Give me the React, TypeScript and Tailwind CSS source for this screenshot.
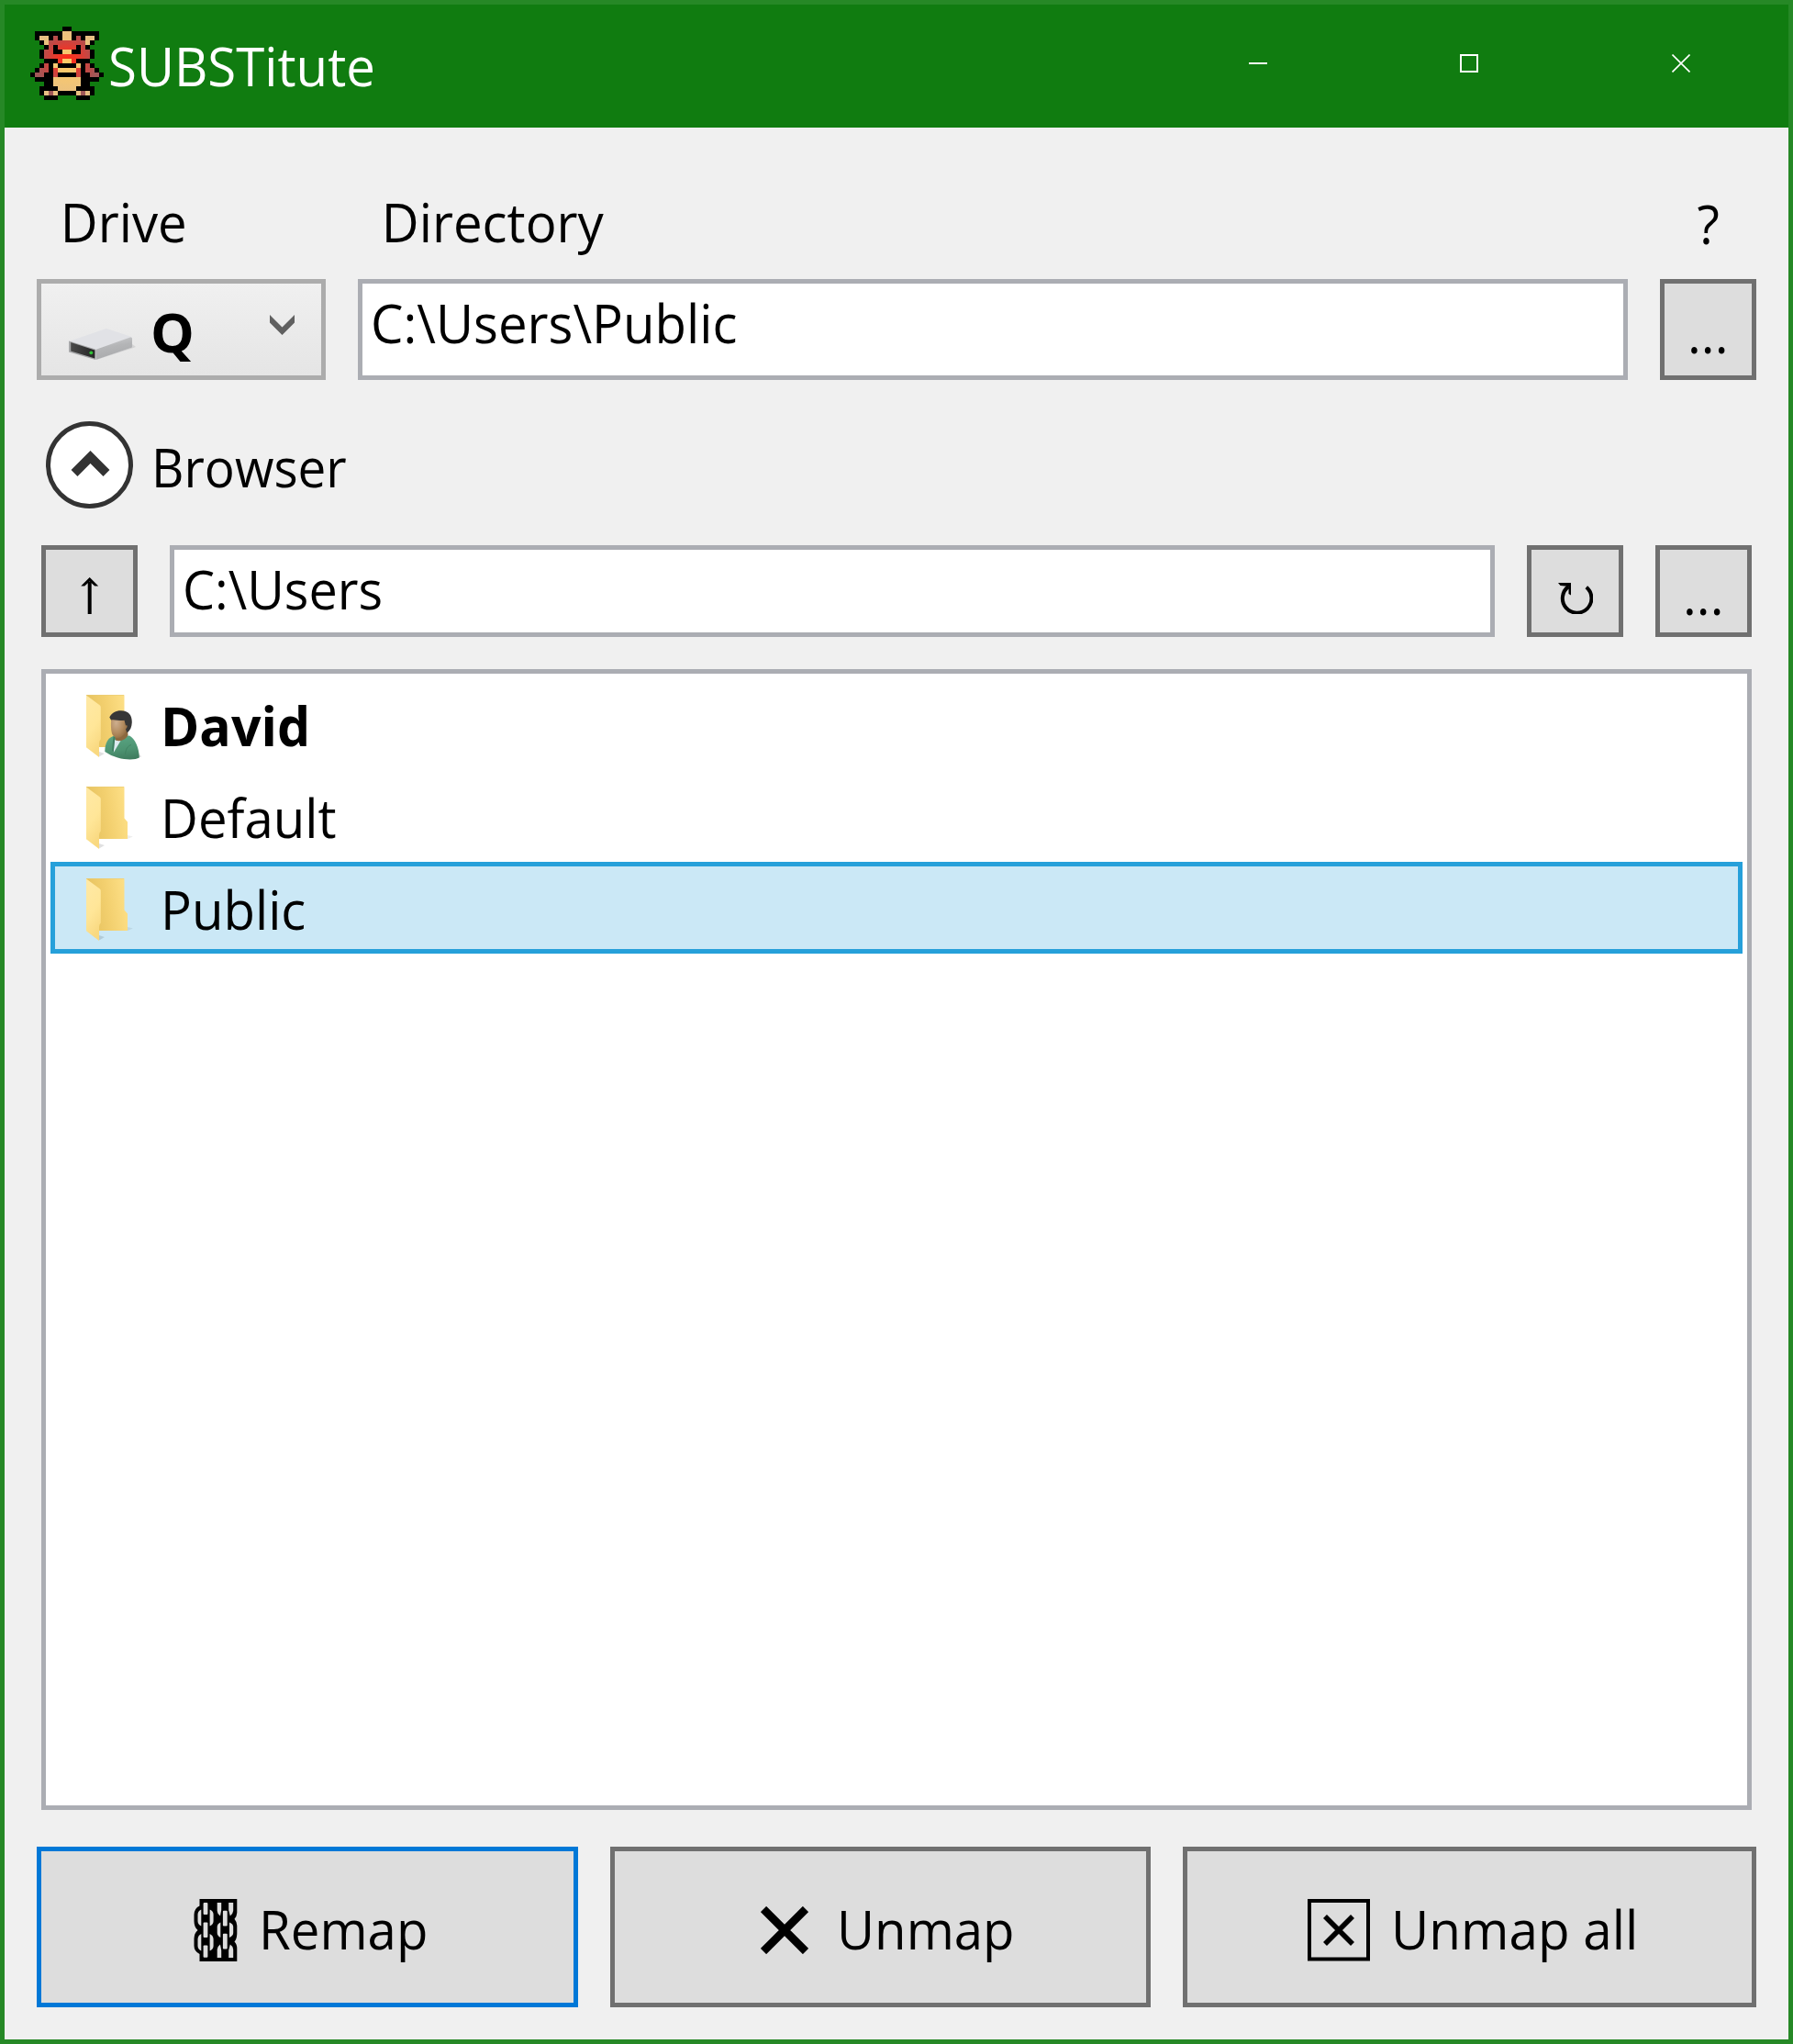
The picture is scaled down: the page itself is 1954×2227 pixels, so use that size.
import React from "react";

const SPRITE = [
  ".......KK.......",
  ".KKKKKKTTKKKKKK.",
  ".KTTKRKTTKRKTTK.",
  "..KTRRRRRRRRTK..",
  "...KRKRRRRKRK...",
  "..KRRKKTTKKRRK..",
  "..KRRRRRRRRRRK..",
  "...KKKRTTRKKK...",
  "..KRKTKKKKTKRK..",
  ".KRRKRTTTTRKRRK.",
  "KRRKKRKKKKRKKRRK",
  ".KKKKTTTTTTKKKK.",
  "...KKTTTTTTKK...",
  "..KKKKTTTTKKKK..",
  "..KTRTKKKKTRTK..",
  "...KKK....KKK...",
];

function AppIcon() {
  return (
    <svg viewBox="0 0 16 16" className="h-20 w-20 shrink-0" shapeRendering="crispEdges">
      <defs>
        <radialGradient id="red" gradientUnits="userSpaceOnUse" cx="8" cy="7.3" r="7">
          <stop offset="0" stopColor="#ff2c18" />
          <stop offset="0.3" stopColor="#f03526" />
          <stop offset="0.6" stopColor="#cc443f" />
          <stop offset="1" stopColor="#a05858" />
        </radialGradient>
        <radialGradient id="tan" gradientUnits="userSpaceOnUse" cx="8" cy="8" r="8">
          <stop offset="0" stopColor="#ffcb66" />
          <stop offset="1" stopColor="#e6bf85" />
        </radialGradient>
      </defs>
      {SPRITE.flatMap((row, y) =>
        row.split("").map((c, x) =>
          c === "." ? null : (
            <rect
              key={`${x}-${y}`}
              x={x}
              y={y}
              width="1"
              height="1"
              fill={c === "K" ? "#000" : c === "R" ? "url(#red)" : "url(#tan)"}
            />
          )
        )
      )}
    </svg>
  );
}

function Label({ children, className = "" }: { children: React.ReactNode; className?: string }) {
  return (
    <span className={`block origin-left scale-x-[0.955] whitespace-pre text-[59px] leading-[80px] ${className}`}>
      {children}
    </span>
  );
}

function DriveIcon() {
  return (
    <svg viewBox="0 0 74 36" className="h-[36px] w-[74px] shrink-0">
      <defs>
        <linearGradient id="dside" x1="0" y1="0" x2="0.3" y2="1">
          <stop offset="0" stopColor="#cfd0d2" />
          <stop offset="0.5" stopColor="#b4b5b7" />
          <stop offset="1" stopColor="#a9aaac" />
        </linearGradient>
        <linearGradient id="dfront" x1="0" y1="0" x2="1" y2="0">
          <stop offset="0" stopColor="#4a4a4a" />
          <stop offset="1" stopColor="#262626" />
        </linearGradient>
      </defs>
      <path d="M30 34 69 21.5 73 20 69 17Z" fill="#d4d4d4" />
      <path d="M0 14 40 0.2Q41 0 42 0.2L67 8.5Q69 9.2 69 11V20.5L30 34 0 25Z" fill="#e1e2e6" />
      <path d="M29 23 67 9.6Q69 9 69 11V20.5L29.5 34Z" fill="url(#dside)" />
      <path d="M0 13.5 29 22.5V34L0 25.5Z" fill="#a6a7a9" />
      <path d="M2.2 15 28.3 23.4V32.6L2.2 24.4Z" fill="url(#dfront)" />
      <circle cx="24.3" cy="26.3" r="1.9" fill="#2fc436" />
    </svg>
  );
}

function FolderIcon({ user = false }: { user?: boolean }) {
  return (
    <svg viewBox="0 0 60 72" className="h-[72px] w-[60px] shrink-0">
      <defs>
        <linearGradient id="fback" x1="0" y1="0.2" x2="1" y2="0">
          <stop offset="0" stopColor="#e6c25f" />
          <stop offset="0.45" stopColor="#f3d06f" />
          <stop offset="1" stopColor="#ffe28a" />
        </linearGradient>
        <linearGradient id="ffront" x1="0" y1="0" x2="0.3" y2="1">
          <stop offset="0" stopColor="#ffe9a6" />
          <stop offset="0.6" stopColor="#ffe698" />
          <stop offset="1" stopColor="#f9d981" />
        </linearGradient>
        <radialGradient id="face" cx="0.3" cy="0.4" r="0.7">
          <stop offset="0" stopColor="#cdae8e" />
          <stop offset="0.6" stopColor="#b18a5e" />
          <stop offset="1" stopColor="#8f6a40" />
        </radialGradient>
        <linearGradient id="shirt" x1="0.3" y1="0" x2="0.5" y2="1">
          <stop offset="0" stopColor="#5aa583" />
          <stop offset="0.6" stopColor="#4d9472" />
          <stop offset="1" stopColor="#3f7d5f" />
        </linearGradient>
      </defs>
      <path d="M14 67.5 20 64 14 62Z" fill="#000" opacity="0.12" />
      <path d="M45 57 51 54.5 45 53Z" fill="#000" opacity="0.07" />
      <path d="M0 0H40.8L41.5 0.8V34.5L45 38.5V57H10Z" fill="url(#fback)" />
      <path d="M0 0.3H41.2" stroke="#e8cb76" strokeWidth="0.7" />
      <path d="M0 0.5 14.6 11.2Q15.8 12 15.8 13.5V48.5Q14 50 14 53V68L0 57.3Z" fill="url(#ffront)" />
      {user && (
        <g>
          <path d="M50 69 60.5 67.5 56 64Z" fill="#000" opacity="0.15" />
          <path d="M20.3 61C20.5 53 23.5 47 29.5 45L47 44.5C53 48 57.5 57 57.8 68.5 52 72 34 71.5 20.3 62Z" fill="url(#shirt)" />
          <path d="M30.5 49 37.5 50 29.8 63Z" fill="#dceaf0" />
          <path d="M29.5 45.5 31.5 46 29.8 62 28 61Z" fill="#3e7f61" />
          <path d="M42.5 65C43 59 45 56 49 54.5" fill="none" stroke="#3d7f60" strokeWidth="0.8" />
          <path d="M31 44 45 38 45.5 44C43 48.5 38 51.5 32 49.5Z" fill="#8d693f" />
          <path d="M27.3 26C26.5 33 27 39.5 28.3 43 29.8 46 33 47.8 36.5 46.5 41 44.5 44 40 46 34L45 25 36 20Z" fill="url(#face)" />
          <path d="M25.3 24.5C28 19 33 17 38 17.2 46 17.5 50 22 49.8 30 49.6 35 48 39 44.5 41.5L43 37.5C46 34 44.5 32.5 43 33.5L41.5 27.8C37 28.8 31 26.5 27 27.5Z" fill="#373737" />
        </g>
      )}
    </svg>
  );
}

function ChainIcon() {
  const slots: [number, number, number, number][] = [
    [10.6, 4, 4.8, 13],
    [10.6, 25.5, 4.8, 16.5],
    [10.6, 50.5, 4.8, 13.3],
    [31.9, 12.8, 4.8, 16.6],
    [31.9, 37.8, 4.8, 16.6],
  ];
  return (
    <svg viewBox="0 0 48 68" className="h-[68px] w-[48px] shrink-0">
      <path
        d="M6.5 0H47.3V15Q47 19.5 44.5 21.7 47.3 25 47.3 29V38Q47 44 44.5 46.5 47.3 49 47.3 54V68H6.5V60Q0.5 57 0.5 51V43Q0.8 37 4.5 34 0.5 30.5 0.5 24V17Q0.8 10 6.5 7.5Z"
        fill="#000"
      />
      <g fill="#ddd">
        {slots.map(([x, y, w, h]) => (
          <rect key={`${x}-${y}`} x={x} y={y} width={w} height={h} rx="1" />
        ))}
        <path d="M25.7 4H30.2V12L29 18.5Q25.7 16 25.7 13Z" />
        <path d="M38.2 4H43.2V13Q42.5 17 39.8 18.5L38.2 12Z" />
        <path d="M25.7 64H30.2V56L29 49.5Q25.7 52 25.7 55Z" />
        <path d="M38.2 64H43.2V55Q42.5 51 39.8 49.5L38.2 56Z" />
        <path d="M29.3 25.5V42Q25.7 40 25.7 37V30.5Q25.7 27 29.3 25.5Z" />
        <path d="M39 25.5V42Q43.2 40 43.2 37V30.5Q43.2 27 39 25.5Z" />
        <path d="M8.3 11.5V29.5Q4.5 27.5 4.5 24V17Q4.5 13 8.3 11.5Z" />
        <path d="M8.3 38V56.5Q4.5 54.5 4.5 51V44Q4.5 40 8.3 38Z" />
        <path d="M17.6 11.5V29.5Q21.6 27.5 21.6 24V17Q21.6 13 17.6 11.5Z" />
        <path d="M17.6 38V56.5Q21.6 54.5 21.6 51V44Q21.6 40 17.6 38Z" />
      </g>
    </svg>
  );
}

function SquareButton({ children, className = "" }: { children: React.ReactNode; className?: string }) {
  return (
    <button className={`flex w-[105px] shrink-0 justify-center border-[5px] border-[#707070] bg-[#dddddd] ${className}`}>
      {children}
    </button>
  );
}

function ListItem({ name, user, selected }: { name: string; user?: boolean; selected?: boolean }) {
  return (
    <div
      className={`flex h-[100px] border-[5px] pl-[34px] ${
        selected ? "border-[#26a0da] bg-[#cbe8f6]" : "border-transparent"
      }`}
    >
      <div className="pt-[13px]">
        <FolderIcon user={user} />
      </div>
      <Label className={user ? "ml-[21px] mt-[6px] scale-x-[0.97]! font-bold" : "ml-[21px] mt-[6px]"}>{name}</Label>
    </div>
  );
}

export default function App() {
  return (
    <div className="flex h-[2227px] w-[1954px] flex-col border-[5px] border-[#268826] bg-[#f0f0f0] font-['Open_Sans',sans-serif] text-black">
      <header className="flex h-[134px] shrink-0 bg-[#107c10] pl-[28px] pt-[24px] text-white">
        <AppIcon />
        <Label className="ml-[5px] mt-[2px]">SUBSTitute</Label>
        <div className="ml-auto mr-[107px] mt-[30px] flex h-5 gap-[210px]">
          <svg viewBox="0 0 20 20" className="h-5 w-5">
            <path d="M0 10H20" stroke="#fff" strokeWidth="2" />
          </svg>
          <svg viewBox="0 0 20 20" className="h-5 w-5">
            <rect x="1" y="1" width="18" height="18" fill="none" stroke="#fff" strokeWidth="2" />
          </svg>
          <svg viewBox="0 0 20 20" className="ml-px h-5 w-5">
            <path d="M0.5 0.5 19.5 19.5M19.5 0.5 0.5 19.5" stroke="#fff" strokeWidth="1.6" />
          </svg>
        </div>
      </header>

      <main className="flex grow flex-col px-[35px] pb-[35px] pt-[62px]">
        <div className="grid h-20 shrink-0 grid-cols-[315px_1fr_105px] gap-x-[35px]">
          <Label className="w-fit pl-[27px]">Drive</Label>
          <Label className="w-fit pl-[27px]">Directory</Label>
          <div className="flex justify-center pt-[2px]">
            <Label className="origin-center!">?</Label>
          </div>
        </div>

        <div className="mt-[23px] grid h-[110px] shrink-0 grid-cols-[315px_1fr_105px] gap-x-[35px]">
          <button className="flex border-[5px] border-[#acacac] bg-linear-to-b from-[#f0f0f0] to-[#e5e5e5] pl-[30px]">
            <div className="pt-[49px]">
              <DriveIcon />
            </div>
            <Label className="ml-[15px] mt-[12px] scale-x-[1.02]! font-bold">Q</Label>
            <svg viewBox="0 0 27 22" className="ml-auto mr-[29px] mt-[34px] h-[22px] w-[27px] shrink-0">
              <path d="M0 0 13.5 13.5 27 0V8.5L13.5 22 0 8.5Z" fill="#606060" />
            </svg>
          </button>
          <div className="border-[5px] border-[#abadb3] bg-white pl-[9px] pt-[2px]">
            <Label className="w-fit">{"C:\\Users\\Public"}</Label>
          </div>
          <SquareButton className="pt-[13px]">
            <Label className="origin-center!">...</Label>
          </SquareButton>
        </div>

        <section className="flex grow flex-col px-[5px] pt-[45px]">
          <div className="flex h-[95px] shrink-0 pl-[5px]">
            <svg viewBox="0 0 95 95" className="h-[95px] w-[95px] shrink-0">
              <circle cx="47.5" cy="47.5" r="45" fill="#fff" stroke="#333" strokeWidth="5" />
              <path d="M31 56.5 48.5 39 66 56.5" fill="none" stroke="#333" strokeWidth="9.8" />
            </svg>
            <Label className="ml-[20px] mt-[9px] scale-x-[0.93]!">Browser</Label>
          </div>

          <div className="mt-[40px] flex h-[100px] shrink-0 gap-[35px]">
            <SquareButton className="pt-[30px]">
              <svg viewBox="0 0 20 40" className="h-[40px] w-[20px]">
                <path d="M7.7 5V40H11.7V5Z" />
                <path d="M0.2 9.5 9.7 0 19.2 9.5H15.2L9.7 4.5 4.2 9.5Z" />
              </svg>
            </SquareButton>
            <div className="grow border-[5px] border-[#abadb3] bg-white pl-[9px] pt-[2px]">
              <Label className="w-fit scale-x-[0.945]!">{"C:\\Users"}</Label>
            </div>
            <SquareButton className="pt-[36px]">
              <svg viewBox="0 0 38 34" className="h-[34px] w-[38px]">
                <path d="M30.8 4.8A15.8 15.8 0 1 1 11.5 4" fill="none" stroke="#000" strokeWidth="4" />
                <path d="M0 0H14V13.5L11.5 12V4L2.5 3Z" />
              </svg>
            </SquareButton>
            <SquareButton className="pt-[8px]">
              <Label className="origin-center!">...</Label>
            </SquareButton>
          </div>

          <div className="mt-[35px] grow border-[5px] border-[#abadb3] bg-white p-[5px]">
            <ListItem name="David" user />
            <ListItem name="Default" />
            <ListItem name="Public" selected />
          </div>
        </section>

        <footer className="mt-[40px] flex h-[175px] shrink-0 gap-[35px]">
          <button className="flex w-[590px] border-[5px] border-[#0078d7] bg-[#dddddd] pl-[166px]">
            <div className="pt-[52px]">
              <ChainIcon />
            </div>
            <Label className="ml-[23px] mt-[44px]">Remap</Label>
          </button>
          <button className="flex w-[589px] border-[5px] border-[#707070] bg-[#dddddd] pl-[159px]">
            <svg viewBox="0 0 52 52" className="mt-[60px] h-[52px] w-[52px] shrink-0">
              <path d="M3 3 49 49M49 3 3 49" stroke="#000" strokeWidth="8.8" />
            </svg>
            <Label className="ml-[31px] mt-[44px]">Unmap</Label>
          </button>
          <button className="flex w-[625px] border-[5px] border-[#707070] bg-[#dddddd] pl-[131px]">
            <svg viewBox="0 0 68 68" className="mt-[52px] h-[68px] w-[68px] shrink-0">
              <rect x="2" y="2" width="64" height="63.5" fill="none" stroke="#000" strokeWidth="4" />
              <path d="M19 19 49 49M49 19 19 49" stroke="#000" strokeWidth="5.6" />
            </svg>
            <Label className="ml-[23px] mt-[44px] scale-x-[0.96]!">Unmap all</Label>
          </button>
        </footer>
      </main>
    </div>
  );
}
